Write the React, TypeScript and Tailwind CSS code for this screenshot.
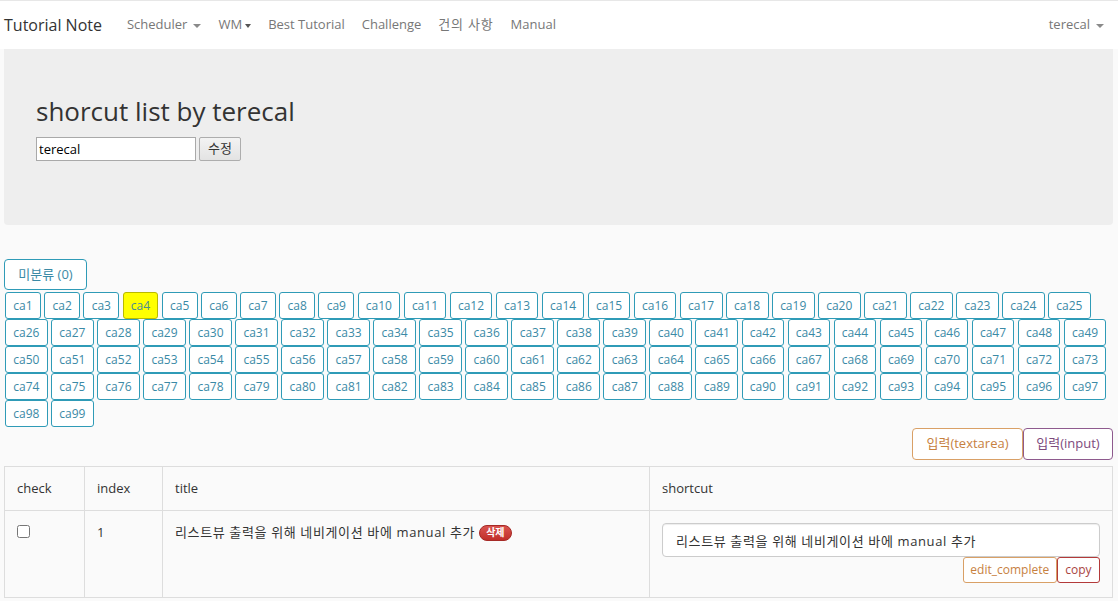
import React from "react";

const font = { fontFamily: '"Open Sans", "Noto Sans CJK KR", sans-serif' };

const Caret = () => (
  <span className="inline-block w-0 h-0 border-t-[4px] border-t-[#8a8a8a] border-x-[4px] border-x-transparent align-middle ml-[6px]" />
);

const cats = Array.from({ length: 99 }, (_, i) => "ca" + (i + 1));

export default function App() {
  return (
    <div style={font} className="min-h-screen bg-[#fafafa] text-[#333]">
      {/* navbar */}
      <nav className="h-[49px] bg-white border-t border-[#e7e7e7] flex items-center pr-[14px]">
        <span className="pl-[4px] text-[16px] text-[#333]">Tutorial Note</span>
        <ul className="flex items-center gap-[17px] ml-[25px] text-[13px] text-[#777]">
          <li>
            Scheduler
            <Caret />
          </li>
          <li>
            WM
            <span className="inline-block w-0 h-0 border-t-[4px] border-t-[#555] border-x-[3.5px] border-x-transparent align-middle ml-[3px]" />
          </li>
          <li>Best Tutorial</li>
          <li>Challenge</li>
          <li className="tracking-[0.8px]">건의 사항</li>
          <li>Manual</li>
        </ul>
        <span className="ml-auto text-[13px] text-[#777]">
          terecal
          <Caret />
        </span>
      </nav>

      <main className="ml-[4px] mr-[5px]">
        {/* jumbotron */}
        <section className="h-[176px] bg-[#eeeeee] rounded-b-[4px] pl-[32px] pt-[47px]">
          <h1 className="text-[26px] leading-[30px] text-[#333]">shorcut list by terecal</h1>
          <div className="flex gap-[3px] mt-[11px]">
            <input
              defaultValue="terecal"
              className="w-[160px] h-[24px] bg-white border border-[#a9a9a9] px-[2px] text-[13px] text-black outline-none"
            />
            <button className="w-[42px] h-[24px] border border-[#adadad] rounded-[2px] bg-gradient-to-b from-[#f3f3f3] to-[#e3e3e3] text-[13px] text-[#333]">
              수정
            </button>
          </div>
        </section>

        {/* categories */}
        <div className="mt-[34px]">
          <button className="h-[31px] w-[83px] border border-[#2f9bb7] rounded-[4px] bg-white text-[13px] text-[#3b8aa6]">
            미분류 (0)
          </button>
        </div>
        <div className="flex flex-wrap gap-x-[3.3px] mt-[2px] pl-[1px]">
          {cats.map((c) => (
            <button
              key={c}
              className={
                c === "ca4"
                  ? "h-[27px] px-[7.3px] border border-[#b9b900] rounded-[3px] bg-[#ffff00] text-[12px] text-[#4a8c93]"
                  : "h-[27px] px-[7.3px] border border-[#2f9bb7] rounded-[3px] bg-white text-[12px] text-[#3b8aa6]"
              }
            >
              {c}
            </button>
          ))}
        </div>

        <div className="flex justify-end mt-[1px]">
          <button className="h-[32px] w-[111px] border border-[#d9a066] rounded-[4px] bg-white text-[13px] text-[#c7813f]">
            입력(textarea)
          </button>
          <button className="h-[32px] w-[90px] border border-[#8e5a8e] rounded-[4px] bg-white text-[13px] text-[#7d4a7d]">
            입력(input)
          </button>
        </div>

        {/* table */}
        <table className="mt-[6px] w-full border-collapse border border-[#dddddd] text-[13px] text-[#333]">
          <thead>
            <tr className="h-[44px]">
              <th className="w-[80px] border border-[#dddddd] px-[12px] text-left font-normal">check</th>
              <th className="w-[78px] border border-[#dddddd] px-[12px] text-left font-normal">index</th>
              <th className="w-[487px] border border-[#dddddd] px-[12px] text-left font-normal">title</th>
              <th className="border border-[#dddddd] px-[12px] text-left font-normal">shortcut</th>
            </tr>
          </thead>
          <tbody>
            <tr className="h-[87px] align-top">
              <td className="border border-[#dddddd] px-[12px] pt-[13px]">
                <input type="checkbox" className="w-[13px] h-[13px] m-0" />
              </td>
              <td className="border border-[#dddddd] px-[12px] pt-[12px]">1</td>
              <td className="border border-[#dddddd] px-[12px] pt-[12px]">
                <span className="tracking-[0.63px]">리스트뷰 출력을 위해 네비게이션 바에 manual 추가</span>
                <span className="inline-flex items-center h-[16px] ml-[4px] px-[6px] rounded-full bg-gradient-to-b from-[#d9534f] to-[#c12e2a] border border-[#a52a26] text-white text-[10px] font-bold align-[1px]">
                  삭제
                </span>
              </td>
              <td className="border border-[#dddddd] px-[12px] pt-[12px]">
                <input
                  defaultValue="리스트뷰 출력을 위해 네비게이션 바에 manual 추가"
                  className="w-full h-[34px] bg-white border border-[#cccccc] rounded-[4px] px-[13px] text-[13px] tracking-[0.63px] text-[#333] shadow-[inset_0_1px_1px_rgba(0,0,0,0.075)] outline-none"
                />
                <div className="flex justify-end">
                  <button className="h-[26px] px-[6.5px] border border-[#d9a066] rounded-[3px] bg-white text-[12px] text-[#c7813f]">
                    edit_complete
                  </button>
                  <button className="h-[26px] px-[7.5px] border border-[#b33a3a] rounded-[3px] bg-white text-[12px] text-[#a94442]">
                    copy
                  </button>
                </div>
              </td>
            </tr>
          </tbody>
        </table>
      </main>
    </div>
  );
}
